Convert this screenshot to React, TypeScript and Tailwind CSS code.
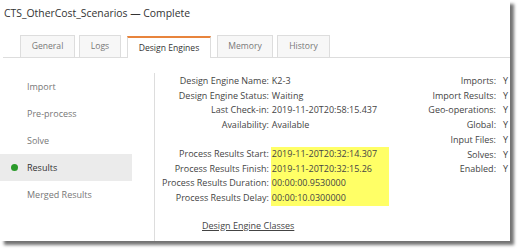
import React from "react";

const tabs: [string, string][] = [
  ["General", "w-[55px] ml-0"],
  ["Logs", "w-[42px] ml-[4px]"],
  ["Design Engines", "w-[84px] ml-[6px]"],
  ["Memory", "w-[56px] ml-[6px]"],
  ["History", "w-[53px] ml-[4px]"],
];
const side = ["Import", "Pre-process", "Solve", "Results", "Merged Results"];

const rows1: [string, string][] = [
  ["Design Engine Name:", "K2-3"],
  ["Design Engine Status:", "Waiting"],
  ["Last Check-in:", "2019-11-20T20:58:15.437"],
  ["Availability:", "Available"],
];
const rows2: [string, string][] = [
  ["Process Results Start:", "2019-11-20T20:32:14.307"],
  ["Process Results Finish:", "2019-11-20T20:32:15.26"],
  ["Process Results Duration:", "00:00:00.9530000"],
  ["Process Results Delay:", "00:00:10.0300000"],
];
const rows3 = ["Imports:", "Import Results:", "Geo-operations:", "Global:", "Input Files:", "Solves:", "Enabled:"];

export default function App() {
  return (
    <div className="w-[519px] h-[250px] bg-white overflow-hidden" style={{ fontFamily: "'Open Sans', sans-serif" }}>
      <div className="w-[510px] h-[241px] bg-white shadow-[4px_4px_3px_rgba(0,0,0,0.55)] overflow-hidden flex flex-col">
        <div className="pl-[4px] pt-[5px] text-[10.4px] text-[#333] leading-[16px] h-[30px]">
          CTS_OtherCost_Scenarios — Complete
        </div>
        <div className="flex items-end pl-[17px] border-b border-[#ddd] ml-[3px] h-[28px]">
          {tabs.map(([t, cls]) => {
            const active = t === "Design Engines";
            return (
              <div
                key={t}
                className={
                  cls +
                  (active
                    ? " h-[22px] flex items-center justify-center text-[8.6px] text-[#333] border-t-2 border-t-[#e8843c] border-x border-x-[#ddd] bg-white -mb-px"
                    : " h-[22px] flex items-center justify-center text-[8.6px] text-[#777] border border-[#ddd] border-b-0 bg-[#f7f7f7]")
                }
              >
                {t}
              </div>
            );
          })}
        </div>
        <div className="flex flex-1 pt-[15px]">
          <div className="w-[155px] border-r border-[#ddd] flex flex-col pr-[22px]">
            {side.map((s) => {
              const active = s === "Results";
              return (
                <div
                  key={s}
                  className={
                    "h-[27px] flex items-center text-[9px] pl-[4px] " +
                    (active ? "bg-[#ebebeb] text-[#333]" : "text-[#777]")
                  }
                >
                  <span className={"w-[7px] h-[7px] rounded-full mr-[9px] ml-[7px] " + (active ? "bg-[#2a9a2a]" : "bg-transparent")} />
                  {s}
                </div>
              );
            })}
          </div>
          <div className="flex-1 flex pl-[7px] pt-[1px]">
            <div className="flex flex-col">
              <div className="grid grid-cols-[auto_auto] gap-x-[2px] text-[9px] leading-[14.7px] text-[#444]">
                {rows1.map(([k, v]) => (
                  <React.Fragment key={k}>
                    <div className="text-right">{k}</div>
                    <div className="pl-[1px]">{v}</div>
                  </React.Fragment>
                ))}
                <div className="h-[14px]" />
                <div />
                {rows2.map(([k, v]) => (
                  <React.Fragment key={k}>
                    <div className="text-right">{k}</div>
                    <div className="pl-[1px] bg-[#ffff66] pr-[12px]">{v}</div>
                  </React.Fragment>
                ))}
              </div>
              <div className="mt-[13px] text-[9px] text-[#444] underline pl-[40px]">Design Engine Classes</div>
            </div>
            <div className="flex-1 flex justify-end">
              <div className="grid grid-cols-[auto_auto] text-[9px] leading-[14.7px] text-[#444] h-fit">
                {rows3.map((k) => (
                  <React.Fragment key={k}>
                    <div className="text-right">{k}</div>
                    <div className="pl-[7px] w-[14px] overflow-hidden">Y</div>
                  </React.Fragment>
                ))}
              </div>
            </div>
          </div>
        </div>
      </div>
    </div>
  );
}
